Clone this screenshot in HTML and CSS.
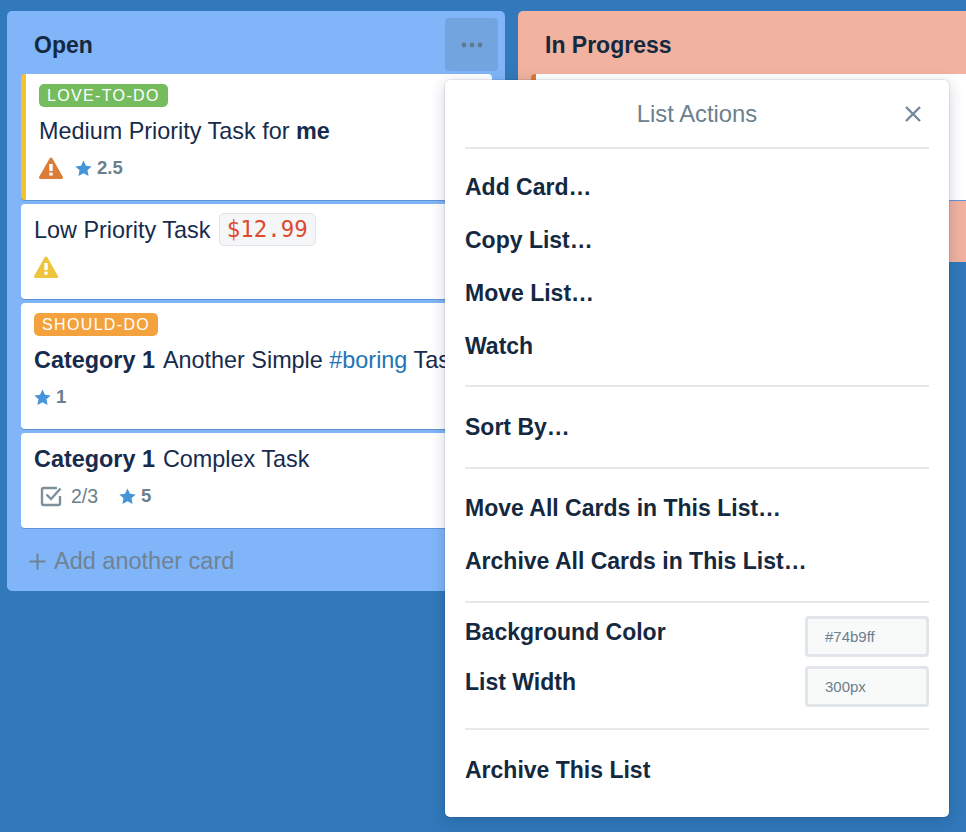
FILE: index.html
```html
<!DOCTYPE html>
<html lang="en">
<head>
  <meta charset="UTF-8">
  <meta name="viewport" content="width=device-width, initial-scale=1.0">
  <title>Board</title>
  <link rel="stylesheet" href="styles.css">
</head>
<body>

  <div class="board">

    <section class="list list-open">
      <header class="list-header">
        <h2>Open</h2>
        <button class="menu-btn" type="button" aria-label="List actions">
          <svg width="22" height="6" viewBox="0 0 22 6"><circle cx="3" cy="3" r="2.4"/><circle cx="11" cy="3" r="2.4"/><circle cx="19" cy="3" r="2.4"/></svg>
        </button>
      </header>

      <article class="card card-medium">
        <span class="tag tag-green">LOVE-TO-DO</span>
        <p class="card-title">Medium Priority Task for <b>me</b></p>
        <div class="badges">
          <svg class="warn" viewBox="0 0 24 22"><path class="warn-orange" d="M12 2 L22.5 20.5 H1.5 Z"/><rect x="10.3" y="7" width="3.4" height="7" fill="#fff"/><rect x="10.3" y="15.6" width="3.4" height="3" fill="#fff"/></svg>
          <span class="points">
            <svg class="star" viewBox="0 0 24 24"><path d="M12 .6l3.5 7.4 8 1.1-5.9 5.5 1.6 8L12 18.7l-7.2 3.9 1.6-8L.5 9.1l8-1.1z"/></svg>2.5
          </span>
        </div>
      </article>

      <article class="card">
        <p class="card-title first">Low Priority Task <code class="price">$12.99</code></p>
        <div class="badges">
          <svg class="warn" viewBox="0 0 24 22"><path class="warn-yellow" d="M12 2 L22.5 20.5 H1.5 Z"/><rect x="10.3" y="7" width="3.4" height="7" fill="#fff"/><rect x="10.3" y="15.6" width="3.4" height="3" fill="#fff"/></svg>
        </div>
      </article>

      <article class="card">
        <span class="tag tag-orange">SHOULD-DO</span>
        <p class="card-title"><b class="cat">Category 1</b>Another Simple <a class="hashtag">#boring</a> Task</p>
        <div class="badges">
          <span class="points">
            <svg class="star" viewBox="0 0 24 24"><path d="M12 .6l3.5 7.4 8 1.1-5.9 5.5 1.6 8L12 18.7l-7.2 3.9 1.6-8L.5 9.1l8-1.1z"/></svg>1
          </span>
        </div>
      </article>

      <article class="card">
        <p class="card-title first"><b class="cat">Category 1</b>Complex Task</p>
        <div class="badges badges-check">
          <span class="check">
            <svg viewBox="0 0 22 22" width="22" height="22"><path d="M20 11V18.5a1.5 1.5 0 0 1-1.5 1.5H3.500A1.5 1.5 0 0 1 2 18.5V4.5A1.5 1.5 0 0 1 3.500 3H17" fill="none" stroke="#7d909c" stroke-width="2.4"/><path d="M6.5 9.5l4.5 4.5 9.5-10.5" fill="none" stroke="#7d909c" stroke-width="2.4"/></svg>2/3
          </span>
          <span class="points">
            <svg class="star" viewBox="0 0 24 24"><path d="M12 .6l3.5 7.4 8 1.1-5.9 5.5 1.6 8L12 18.7l-7.2 3.9 1.6-8L.5 9.1l8-1.1z"/></svg>5
          </span>
        </div>
      </article>

      <div class="add-card">
        <svg width="19" height="19" viewBox="0 0 19 19"><path d="M9.5 1.5v16M1.5 9.5h16" stroke="#6f8394" stroke-width="2" fill="none"/></svg>
        <span>Add another card</span>
      </div>
    </section>

    <section class="list list-progress">
      <header class="list-header">
        <h2>In Progress</h2>
      </header>
      <article class="card card-urgent"></article>
    </section>

    <aside class="popover">
      <header class="popover-header">
        <span>List Actions</span>
        <svg class="close" width="16" height="16" viewBox="0 0 16 16"><path d="M1 1l14 14M15 1L1 15" stroke="#74879a" stroke-width="2.4" fill="none"/></svg>
      </header>
      <ul class="actions actions-first">
        <li>Add Card…</li>
        <li>Copy List…</li>
        <li>Move List…</li>
        <li>Watch</li>
      </ul>
      <ul class="actions">
        <li>Sort By…</li>
      </ul>
      <ul class="actions actions-bulk">
        <li>Move All Cards in This List…</li>
        <li>Archive All Cards in This List…</li>
      </ul>
      <div class="settings">
        <label class="setting">Background Color <input type="text" value="#74b9ff" readonly></label>
        <label class="setting">List Width <input type="text" value="300px" readonly></label>
      </div>
      <ul class="actions actions-last">
        <li>Archive This List</li>
      </ul>
    </aside>

  </div>

</body>
</html>
```

FILE: styles.css
```css
* {
  margin: 0;
  padding: 0;
  box-sizing: border-box;
}

html, body {
  height: 100%;
  overflow: hidden;
}

body {
  font-family: "Liberation Sans", Arial, sans-serif;
  background-color: #3179ba;
  color: #172b4d;
}

.board {
  position: relative;
  display: flex;
  align-items: flex-start;
  gap: 13px;
  padding: 11px 0 0 7px;
  width: 966px;
  height: 832px;
  overflow: hidden;
}

.list {
  flex: none;
  width: 498px;
  border-radius: 5px;
  padding: 0 13px 0 14px;
}

.list-open {
  background-color: #81b5f9;
  height: 580px;
}

.list-progress {
  background-color: #f1b2a0;
  height: 251px;
  padding-left: 13px;
}

.list-progress .list-header {
  padding-left: 14px;
}

.list-header {
  display: flex;
  justify-content: space-between;
  height: 63px;
  padding: 21px 0 0 13px;
}

.list-header h2 {
  font-size: 23px;
  line-height: 26px;
  font-weight: 700;
  color: #14293f;
}

.menu-btn {
  position: absolute;
  left: 445px;
  top: 18px;
  width: 53px;
  height: 53px;
  border: 0;
  border-radius: 4px;
  background-color: #72a4df;
  display: flex;
  align-items: center;
  justify-content: center;
}

.menu-btn svg {
  fill: #5f7a93;
}

.card {
  background-color: #fff;
  border-radius: 4px;
  padding: 10px 13px 0;
  margin-bottom: 4px;
  box-shadow: 0 1px 0 #5f94d6;
  height: 95px;
}

.card-medium {
  height: 126px;
  border-left: 5px solid #f2c230;
}

.card:nth-of-type(3) {
  height: 126px;
}

.card-urgent {
  height: 126px;
  border-left: 5px solid #dd7b33;
}

.tag {
  display: inline-block;
  height: 23px;
  line-height: 23px;
  padding: 0 8px;
  border-radius: 5px;
  color: #fff;
  font-size: 16px;
  letter-spacing: 1.35px;
  vertical-align: top;
}

.tag-green {
  background-color: #75bc5f;
}

.tag-orange {
  background-color: #f4a23e;
}

.card-title {
  font-size: 23.4px;
  line-height: 26px;
  margin-top: 11px;
  white-space: nowrap;
  color: #172b4d;
}

.card-title.first {
  margin-top: 3px;
}

.card-title b {
  font-weight: 700;
}

.cat {
  margin-right: 8px;
}

.hashtag {
  color: #2274b5;
}

.price {
  display: inline-block;
  font-family: "DejaVu Sans Mono", "Liberation Mono", monospace;
  font-size: 22.4px;
  line-height: 31px;
  padding: 0 7px;
  margin: -4px 0 -4px 2px;
  color: #de4a2f;
  background-color: #f5f6f7;
  border: 1px solid #e1e4e8;
  border-radius: 5px;
  vertical-align: top;
}

.badges {
  display: flex;
  align-items: center;
  gap: 12px;
  margin-top: 12px;
  height: 24px;
}

.badges-check {
  padding-left: 6px;
  gap: 21px;
}

.warn {
  width: 24px;
  height: 22px;
}

.warn-orange {
  fill: #db7d36;
  stroke: #db7d36;
  stroke-width: 3;
  stroke-linejoin: round;
}

.warn-yellow {
  fill: #eec43c;
  stroke: #eec43c;
  stroke-width: 3;
  stroke-linejoin: round;
}

.points {
  display: inline-flex;
  align-items: center;
  gap: 5px;
  font-size: 18.5px;
  font-weight: 700;
  color: #6b808c;
}

.star {
  width: 17px;
  height: 17px;
  fill: #4495d9;
}

.check {
  display: inline-flex;
  align-items: center;
  gap: 9px;
  font-size: 19.5px;
  color: #6b808c;
}

.add-card {
  display: flex;
  align-items: center;
  gap: 7px;
  margin-top: 20px;
  padding-left: 7px;
  font-size: 23.5px;
  color: #6f8394;
}

.popover {
  position: absolute;
  left: 445px;
  top: 80px;
  width: 504px;
  height: 737px;
  background-color: #fff;
  border-radius: 5px;
  box-shadow: 0 0 0 1px rgba(9, 30, 66, 0.08), 0 4px 16px rgba(9, 30, 66, 0.2);
  padding: 0 20px;
}

.popover-header {
  position: relative;
  height: 69px;
  border-bottom: 2px solid #e5e9ec;
  display: flex;
  align-items: center;
  justify-content: center;
  font-size: 23.8px;
  color: #6b808c;
}

.close {
  position: absolute;
  right: 8px;
  top: 26px;
}

.actions {
  list-style: none;
  padding: 14px 0 13px;
  border-bottom: 2px solid #e5e9ec;
}

.actions-first {
  padding: 12px 0;
}

.actions-bulk {
  padding: 13px 0;
}

.actions-last {
  border-bottom: 0;
}

.actions li {
  height: 53px;
  line-height: 53px;
  font-size: 23px;
  font-weight: 700;
  color: #14293f;
}

.settings {
  padding: 13px 0 21px;
  border-bottom: 2px solid #e5e9ec;
  display: flex;
  flex-direction: column;
  gap: 9px;
}

.setting {
  display: flex;
  justify-content: space-between;
  font-size: 23px;
  font-weight: 700;
  color: #14293f;
  line-height: 33px;
}

.setting input {
  width: 124px;
  height: 41px;
  border: 3px solid #e2e5e9;
  border-radius: 4px;
  background-color: #f8f9f9;
  padding-left: 17px;
  font-family: "Liberation Sans", Arial, sans-serif;
  font-size: 15px;
  color: #6b808c;
}
```
